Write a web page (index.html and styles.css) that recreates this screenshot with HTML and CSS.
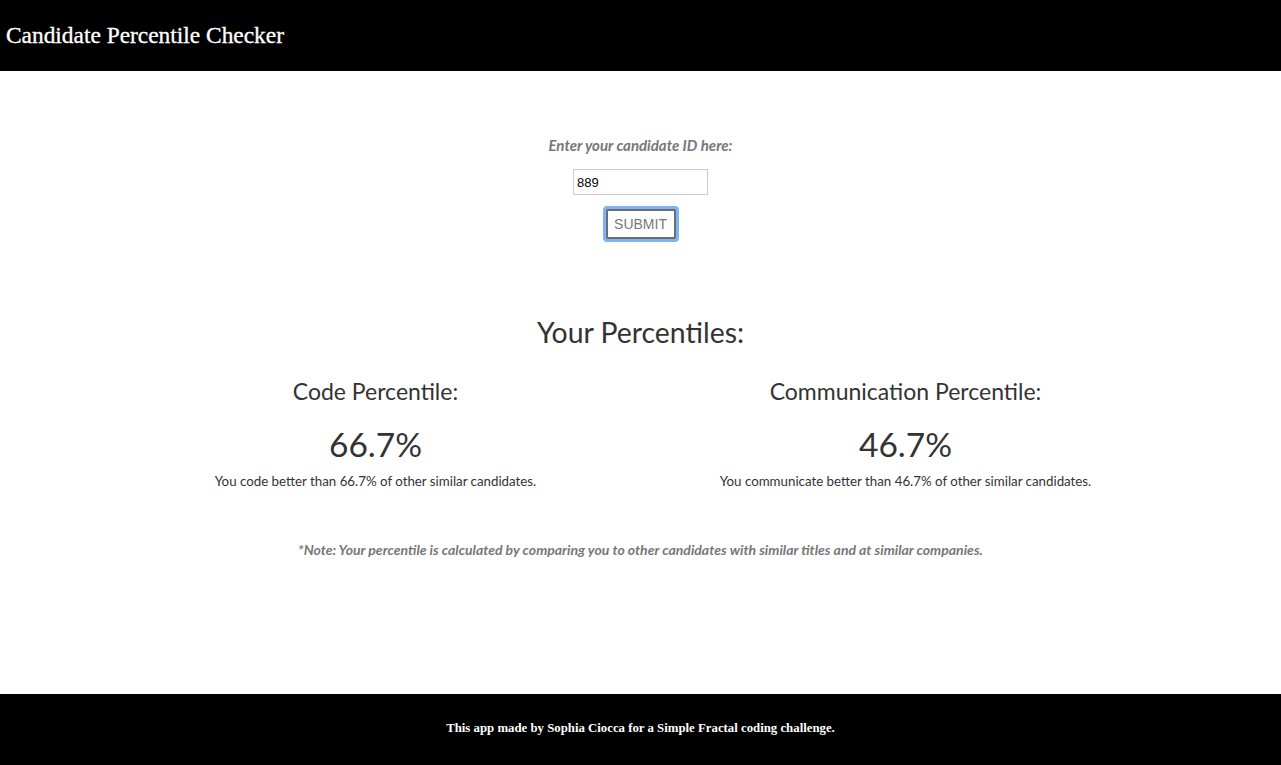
FILE: index.html
```html
<!DOCTYPE html>
<html>
<head>
<meta charset="utf-8">
<title>Candidate Percentile Checker</title>
<link rel="stylesheet" href="styles.css">
</head>
<body>
<header class="topbar">
  <h1 class="brand">Candidate Percentile Checker</h1>
</header>
<main class="content">
  <form class="lookup">
    <label class="lookup-label" for="cid">Enter your candidate ID here:</label>
    <input class="lookup-input" id="cid" type="text" value="889">
    <span class="focus-ring"><button class="submit" type="button">SUBMIT</button></span>
  </form>
  <section class="results">
    <h2 class="results-title">Your Percentiles:</h2>
    <div class="columns">
      <div class="col">
        <h3 class="col-title">Code Percentile:</h3>
        <div class="pct">66.7%</div>
        <p class="desc">You code better than 66.7% of other similar candidates.</p>
      </div>
      <div class="col">
        <h3 class="col-title">Communication Percentile:</h3>
        <div class="pct">46.7%</div>
        <p class="desc">You communicate better than 46.7% of other similar candidates.</p>
      </div>
    </div>
    <p class="note">*Note: Your percentile is calculated by comparing you to other candidates with similar titles and at similar companies.</p>
  </section>
</main>
<footer class="footbar">
  <p class="credit">This app made by Sophia Ciocca for a Simple Fractal coding challenge.</p>
</footer>
</body>
</html>
```
FILE: styles.css
```css
* { box-sizing: border-box; }
html, body { margin: 0; padding: 0; }
body {
  font-family: "Lato", "Open Sans", sans-serif;
  color: #333;
  background: #fff;
  display: flex;
  flex-direction: column;
  min-height: 765px;
}
.topbar {
  background: #000;
  height: 71px;
  display: flex;
  align-items: center;
  padding: 0 6px;
}
.brand {
  margin: 0;
  color: #fff;
  font-family: "Liberation Serif", serif;
  font-weight: normal;
  font-size: 23.4px;
  -webkit-text-stroke: 0.3px #fff;
}
.content {
  flex: 1;
  padding-top: 64px;
}
.lookup {
  display: flex;
  flex-direction: column;
  align-items: center;
}
.lookup-label {
  font-style: italic;
  font-weight: bold;
  color: #777;
  font-size: 15px;
  line-height: 20px;
}
.lookup-input {
  margin-top: 14px;
  width: 135px;
  height: 26px;
  border: 1px solid #ccc;
  font-family: "Liberation Sans", sans-serif;
  font-size: 13px;
  padding: 2px 3px;
  color: #000;
}
.focus-ring {
  margin-top: 11px;
  display: inline-block;
  padding: 3px;
  border-radius: 4px;
  background: #7eb4f7;
}
.submit {
  display: block;
  width: 70px;
  height: 30px;
  border: 2px solid #6e6e6e;
  border-radius: 2px;
  background: #fff;
  color: #777;
  font-family: "Liberation Sans", sans-serif;
  font-size: 14px;
  padding: 0;
}
.results {
  width: 1060px;
  margin: 0 auto;
  padding-top: 70px;
  text-align: center;
}
.results-title {
  margin: 0;
  font-weight: normal;
  font-size: 28.4px;
  line-height: 40px;
}
.columns {
  display: grid;
  grid-template-columns: 1fr 1fr;
  margin-top: 24px;
}
.col-title {
  margin: 0;
  font-weight: normal;
  font-size: 23px;
  line-height: 30px;
}
.pct {
  margin-top: 18px;
  font-size: 33.5px;
  line-height: 40px;
}
.desc {
  margin: 8px 0 0;
  font-size: 13.3px;
  line-height: 18px;
}
.note {
  margin: 51px 0 0;
  font-style: italic;
  font-weight: bold;
  color: #777;
  font-size: 14px;
  line-height: 18px;
}
.footbar {
  background: #000;
  height: 71px;
  display: flex;
  align-items: center;
  justify-content: center;
}
.credit {
  margin: 0 0 2px;
  color: #fff;
  font-family: "Liberation Serif", serif;
  font-weight: bold;
  font-size: 12.8px;
}
```
